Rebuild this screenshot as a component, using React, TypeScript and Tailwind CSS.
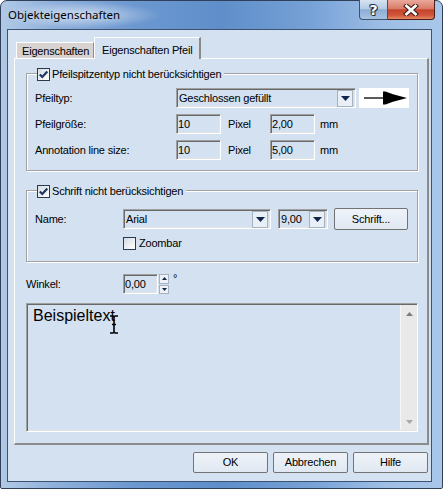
import React from "react";

const sunken =
  "border border-t-[#a0a0a0] border-l-[#a0a0a0] border-r-white border-b-white shadow-[inset_1px_1px_0_#696969,inset_-1px_-1px_0_#e3e3e3]";

function CheckBox({ checked }: { checked?: boolean }) {
  return (
    <span className="w-[13px] h-[13px] shrink-0 border border-[#2b3a4f] bg-[linear-gradient(135deg,#d6dbe1,#ffffff)] flex items-center justify-center">
      {checked ? (
        <svg width="11" height="11" viewBox="0 0 11 11">
          <path d="M1.8 5.4 L4.3 8 L9.3 2.4" fill="none" stroke="#1c3961" strokeWidth="2.2" />
        </svg>
      ) : null}
    </span>
  );
}

function DropBtn() {
  return (
    <span className="w-[16px] h-[17px] shrink-0 border border-[#a6b2c2] bg-[#e9eff7] flex items-center justify-center">
      <svg width="9" height="5" viewBox="0 0 9 5">
        <path d="M0 0H9L4.5 5Z" fill="#10254b" />
      </svg>
    </span>
  );
}

function Combo({ text, w }: { text: string; w: string }) {
  return (
    <div className={`${w} h-[20px] ${sunken} flex items-center justify-between pl-[2px] pr-[2px]`}>
      <span>{text}</span>
      <DropBtn />
    </div>
  );
}

function Field({ text, w }: { text: string; w: string }) {
  return (
    <div className={`${w} h-[20px] ${sunken} flex items-center pl-[1px]`}>
      <span>{text}</span>
    </div>
  );
}

function Btn({ children, w }: { children: React.ReactNode; w: string }) {
  return (
    <div
      className={`${w} h-[21px] border border-[#737373] rounded-[2px] bg-[linear-gradient(180deg,#eef3f9,#e0e8f2)] flex items-center justify-center`}
    >
      {children}
    </div>
  );
}

function Legend({ text }: { text: string }) {
  return (
    <div className="absolute -top-[7px] left-[10px] h-[14px] bg-[#d3e1f0] pr-[3px] flex items-center gap-[1px]">
      <CheckBox checked />
      <span className="pl-[1px]">{text}</span>
    </div>
  );
}

const etched =
  "relative border border-[#a2a2a2] shadow-[1px_1px_0_#ffffff,inset_1px_1px_0_#ffffff]";

export default function App() {
  return (
    <div className="relative w-[443px] h-[489px] font-['Liberation_Sans',Arial,sans-serif] text-[11px] tracking-[-0.2px] text-black leading-none">
      <div className="w-full h-full flex flex-col rounded-t-[7px] rounded-b-[2px] border border-[#2f4058] bg-[linear-gradient(90deg,#b1c9e6_0%,#8fb0db_12%,#6c98d0_30%,#5f8eca_50%,#76a1d6_70%,#9cbde5_86%,#a9c7e8_100%)]">
        <div className="relative h-[28px] shrink-0 flex items-center pl-[7px]">
          <div className="absolute left-0 top-[1px] w-[160px] h-[26px] bg-[radial-gradient(closest-side,rgba(255,255,255,0.6),rgba(255,255,255,0))]" />
          <span className="relative font-['Noto_Sans',sans-serif] text-[11.5px] tracking-normal text-[#000]">
            Objekteigenschaften
          </span>
        </div>
        <div className="ml-[6px] mr-[10px] mb-[6px] flex-1 border border-[#3b5373] bg-[#d3e1f0] flex flex-col">
          {/* tabs */}
          <div className="h-[28px] shrink-0 flex items-end pl-[8px]">
            <div className="w-[78px] h-[16px] border-t border-l border-r border-t-white border-l-white border-r-[#8f8f8f] bg-[#d8d2d1] pl-[5px] pt-[1px] flex items-center">
              Eigenschaften
            </div>
            <div className="relative z-10 -mb-[1px] w-[107px] h-[22px] border-t border-l border-r-2 border-t-white border-l-white border-r-[#8a8a8a] bg-[#d3e1f0] pl-[7px] pt-[3px] flex items-center">
              Eigenschaften Pfeil
            </div>
          </div>
          {/* panel */}
          <div className="ml-[6px] w-[415px] h-[387px] shrink-0 border-t border-l border-r-2 border-b-2 border-t-white border-l-white border-r-[#8b8b8b] border-b-[#8b8b8b] pl-[11px] pt-[14px] flex flex-col">
            {/* group 1 */}
            <div className={`${etched} w-[392px] h-[98px] shrink-0 pl-[8px] pt-[14px] flex flex-col`}>
              <Legend text="Pfeilspitzentyp nicht berücksichtigen" />
              <div className="h-[20px] flex items-center">
                <span className="w-[141px]">Pfeiltyp:</span>
                <Combo text="Geschlossen gefüllt" w="w-[180px]" />
                <div className="ml-[3px] w-[50px] h-[20px] bg-white">
                  <svg width="50" height="20" viewBox="0 0 50 20">
                    <line x1="5" y1="10" x2="26" y2="10" stroke="#000" strokeWidth="1.3" />
                    <path d="M24 3.5 L26.5 3.5 L34 6.3 L48 10 L34 13.7 L26.5 16.5 L24 16.5 Z" fill="#000" />
                  </svg>
                </div>
              </div>
              <div className="mt-[6px] h-[20px] flex items-center">
                <span className="w-[141px]">Pfeilgröße:</span>
                <Field text="10" w="w-[45px]" />
                <span className="ml-[7px] w-[42px]">Pixel</span>
                <Field text="2,00" w="w-[45px]" />
                <span className="ml-[5px]">mm</span>
              </div>
              <div className="mt-[6px] h-[20px] flex items-center">
                <span className="w-[141px]">Annotation line size:</span>
                <Field text="10" w="w-[45px]" />
                <span className="ml-[7px] w-[42px]">Pixel</span>
                <Field text="5,00" w="w-[45px]" />
                <span className="ml-[5px]">mm</span>
              </div>
            </div>
            {/* group 2 */}
            <div className={`${etched} mt-[19px] w-[392px] h-[72px] shrink-0 pl-[8px] pt-[18px] flex flex-col`}>
              <Legend text="Schrift nicht berücksichtigen" />
              <div className="h-[20px] flex items-center">
                <span className="w-[88px]">Name:</span>
                <Combo text="Arial" w="w-[148px]" />
                <div className="ml-[7px]">
                  <Combo text="9,00" w="w-[50px]" />
                </div>
                <div className="ml-[6px]">
                  <div className="w-[74px] h-[22px] border border-[#737373] rounded-[2px] bg-[linear-gradient(180deg,#eef3f9,#e0e8f2)] flex items-center justify-center">
                    Schrift...
                  </div>
                </div>
              </div>
              <div className="mt-[7px] h-[14px] flex items-center pl-[88px] gap-[3px]">
                <CheckBox />
                <span>Zoombar</span>
              </div>
            </div>
            {/* winkel */}
            <div className="mt-[12px] h-[20px] shrink-0 flex items-center">
              <span className="w-[97px]">Winkel:</span>
              <Field text="0,00" w="w-[35px]" />
              <div className="ml-[1px] w-[10px] h-[20px] flex flex-col gap-[1px]">
                <span className="flex-1 border border-[#a6b2c2] bg-[#eef2f8] flex items-center justify-center">
                  <svg width="5" height="3" viewBox="0 0 5 3">
                    <path d="M0 3H5L2.5 0Z" fill="#10254b" />
                  </svg>
                </span>
                <span className="flex-1 border border-[#a6b2c2] bg-[#eef2f8] flex items-center justify-center">
                  <svg width="5" height="3" viewBox="0 0 5 3">
                    <path d="M0 0H5L2.5 3Z" fill="#10254b" />
                  </svg>
                </span>
              </div>
              <span className="ml-[4px] self-start -mt-[1px]">°</span>
            </div>
            {/* text area */}
            <div className={`relative mt-[9px] w-[392px] h-[129px] shrink-0 ${sunken} flex`}>
              <div className="flex-1 pl-[6px] pt-[3px] text-[16px] leading-[18px] tracking-normal">
                Beispieltext
              </div>
              <div className="w-[17px] my-[1px] mr-[0px] bg-[#e9e9e9] border-l border-l-[#f6f6f6] flex flex-col justify-between">
                <div className="h-[17px] flex items-center justify-center">
                  <svg width="7" height="4" viewBox="0 0 7 4">
                    <path d="M0 4H7L3.5 0Z" fill="#7c7c7c" />
                  </svg>
                </div>
                <div className="h-[17px] flex items-center justify-center">
                  <svg width="7" height="4" viewBox="0 0 7 4">
                    <path d="M0 0H7L3.5 4Z" fill="#a8a8a8" />
                  </svg>
                </div>
              </div>
              <svg
                className="absolute left-[82px] top-[11px]"
                width="10"
                height="19"
                viewBox="0 0 10 19"
              >
                <path
                  d="M1 1H4L5 2L6 1H9 M5 2V17 M1 18H4L5 17L6 18H9 M3 9.5H7"
                  fill="none"
                  stroke="#000"
                  strokeWidth="1.6"
                />
              </svg>
            </div>
          </div>
          {/* buttons */}
          <div className="mt-[7px] flex justify-end gap-[5px] pr-[3px]">
            <Btn w="w-[75px]">OK</Btn>
            <Btn w="w-[75px]">Abbrechen</Btn>
            <Btn w="w-[75px]">Hilfe</Btn>
          </div>
        </div>
      </div>
      {/* caption buttons */}
      <div className="absolute top-0 left-[359px] flex">
        <div className="w-[29px] h-[20px] rounded-bl-[4px] border border-t-0 border-[#3f526b] bg-[linear-gradient(180deg,#d5e2f1_0%,#b6cbe4_45%,#8dadd4_52%,#a6c3e4_100%)] flex items-center justify-center">
          <span className="font-['DejaVu_Sans',sans-serif] font-bold text-[14px] tracking-normal text-white [text-shadow:1px_0_0_#24354c,-1px_0_0_#24354c,0_1px_0_#24354c,0_-1px_0_#24354c,1px_1px_0_#24354c,-1px_-1px_0_#24354c]">
            ?
          </span>
        </div>
        <div className="w-[47px] h-[20px] rounded-br-[4px] border border-l-0 border-t-0 border-[#4b1f18] bg-[linear-gradient(180deg,#eaa99b_0%,#da7b68_45%,#c4432c_52%,#d0553a_80%,#e58a64_100%)] flex items-center justify-center">
          <svg width="16" height="12" viewBox="0 0 16 12">
            <path d="M3.5 2L12.5 10M12.5 2L3.5 10" stroke="#3a1a14" strokeWidth="4.8" strokeLinecap="square" />
            <path d="M3.5 2L12.5 10M12.5 2L3.5 10" stroke="#ffffff" strokeWidth="2.8" strokeLinecap="square" />
          </svg>
        </div>
      </div>
    </div>
  );
}
